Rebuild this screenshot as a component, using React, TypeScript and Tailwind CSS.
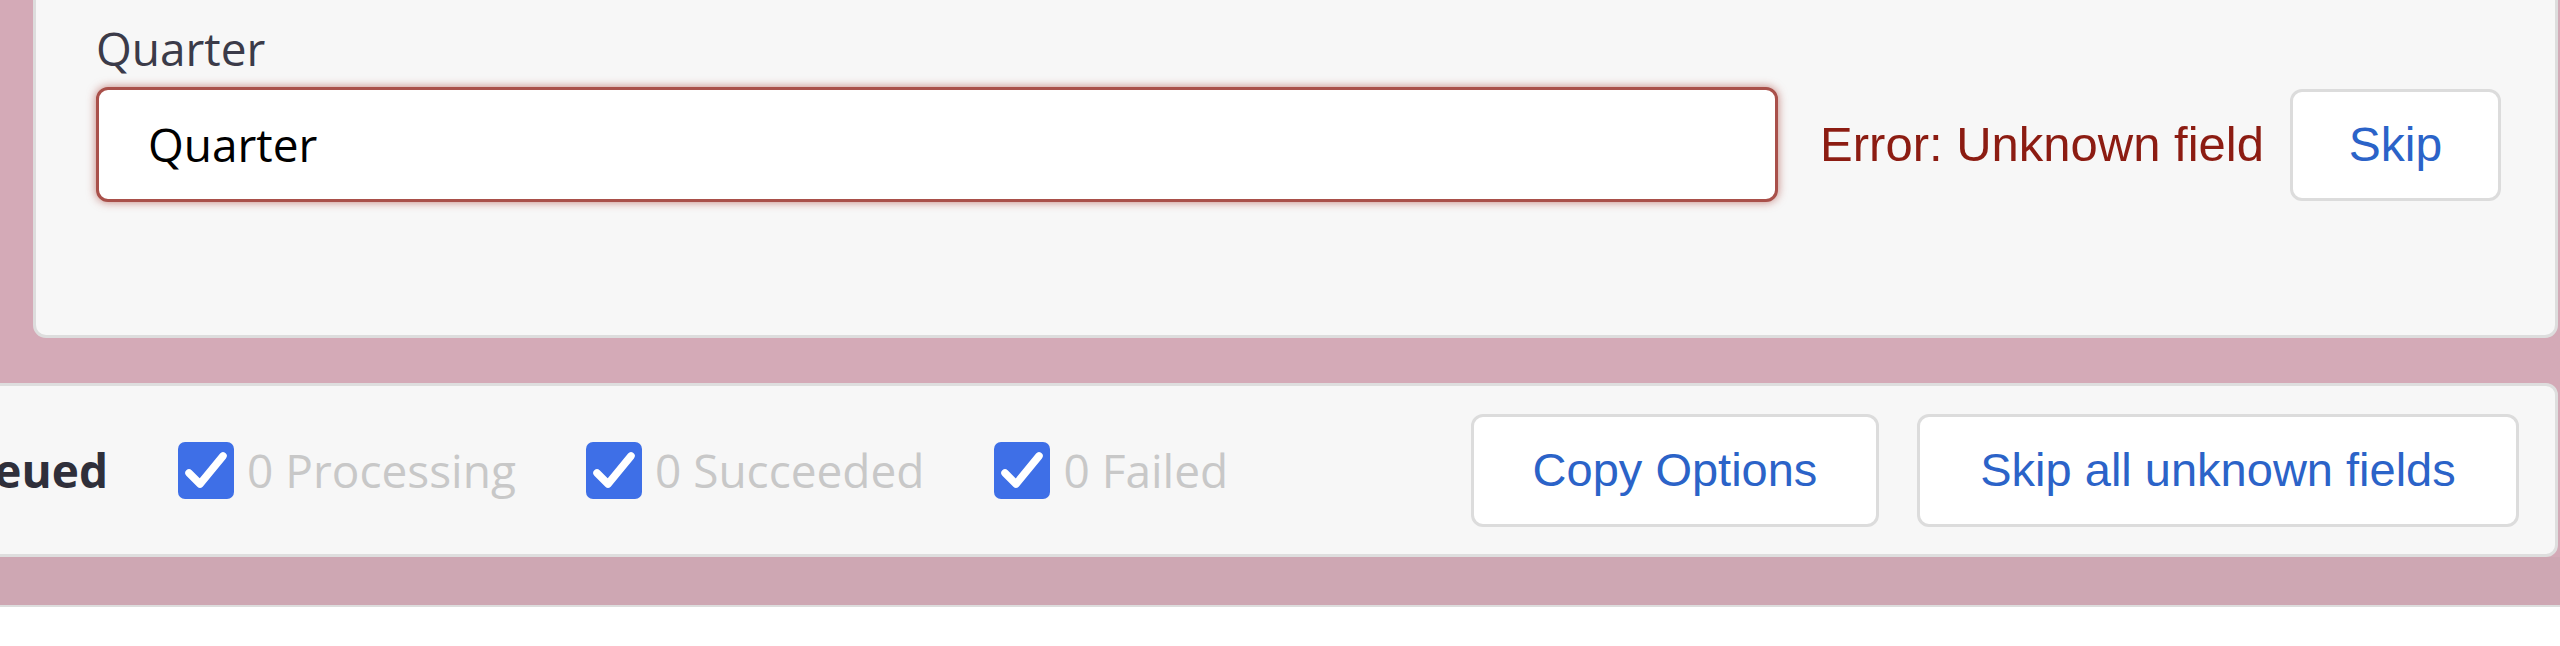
import React from 'react';

// ─── Small pieces ───────────────────────────────────────────────────────────

function Check() {
    return (
        <div className="w-[56px] h-[57px] rounded-[7px] bg-[#3e6fe7] flex items-center justify-center shrink-0">
            <svg width="56" height="57" viewBox="0 0 56 57">
                <polyline
                    points="11,31 22,42 45,14"
                    fill="none"
                    stroke="white"
                    strokeWidth="7.5"
                    strokeLinecap="round"
                    strokeLinejoin="round"
                />
            </svg>
        </div>
    );
}

function Status({ label }: { label: string }) {
    return (
        <div className="flex items-center ml-[70px]">
            <Check />
            <span className="ml-[13px] text-[46px] leading-none text-[#c8c8c8] whitespace-nowrap">{label}</span>
        </div>
    );
}

function LightButton({ children, width }: { children: React.ReactNode; width: string }) {
    return (
        <button
            className={`${width} h-[113px] rounded-[12px] border-[3px] border-[#dcdcdc] bg-white text-[#2b63c8] text-[47px] font-['Liberation_Sans',Arial,sans-serif] flex items-center justify-center whitespace-nowrap`}
        >
            {children}
        </button>
    );
}

// ─── Main Page ──────────────────────────────────────────────────────────────

export default function App() {
    return (
        <div className="w-[2560px] h-[646px] overflow-hidden bg-[#d4aab7] flex flex-col font-['Open_Sans',sans-serif]">

            {/* Field mapping card */}
            <div className="pl-[33px] pr-[2px] shrink-0">
                <div className="-mt-[20px] h-[358px] bg-[#f7f7f7] border-[3px] border-[#dddddd] rounded-[13px] pt-[42px] pl-[60px] pr-[54px]">
                    <div className="text-[46px] leading-none text-[#3b3b49]">Quarter</div>
                    <div className="flex items-center mt-[16px]">
                        <div className="flex-1 h-[115px] bg-white border-[3px] border-[#a9504a] rounded-[12px] shadow-[0_0_10px_rgba(160,45,35,0.6)] pl-[49px] flex items-center text-[46px] text-black">
                            Quarter
                        </div>
                        <span className="ml-[42px] text-[49px] text-[#8c1c12] whitespace-nowrap font-['Liberation_Sans',Arial,sans-serif]">
                            Error: Unknown field
                        </span>
                        <button className="ml-[26px] w-[211px] h-[112px] rounded-[12px] border-[3px] border-[#dcdcdc] bg-white text-[#2b63c8] text-[48px] font-['Liberation_Sans',Arial,sans-serif] flex items-center justify-center">
                            Skip
                        </button>
                    </div>
                </div>
            </div>

            {/* Status bar */}
            <div className="mt-[45px] pr-[2px] shrink-0">
                <div className="-ml-[200px] h-[174px] bg-[#f7f7f7] border-[3px] border-[#dedede] rounded-[12px] flex items-center justify-between pr-[36px]">
                    <div className="flex items-center">
                        <span className="w-[305px] text-right text-[46px] leading-none font-bold text-[#2f2f3a] whitespace-nowrap">0 Queued</span>
                        <Status label="0 Processing" />
                        <Status label="0 Succeeded" />
                        <Status label="0 Failed" />
                    </div>
                    <div className="flex items-center gap-[38px]">
                        <LightButton width="w-[408px]">Copy Options</LightButton>
                        <LightButton width="w-[602px]">Skip all unknown fields</LightButton>
                    </div>
                </div>
            </div>

            <div className="h-[48px] bg-[#cea7b3] shrink-0" />
            <div className="flex-1 bg-white border-t-2 border-[#dddddd]" />
        </div>
    );
}
